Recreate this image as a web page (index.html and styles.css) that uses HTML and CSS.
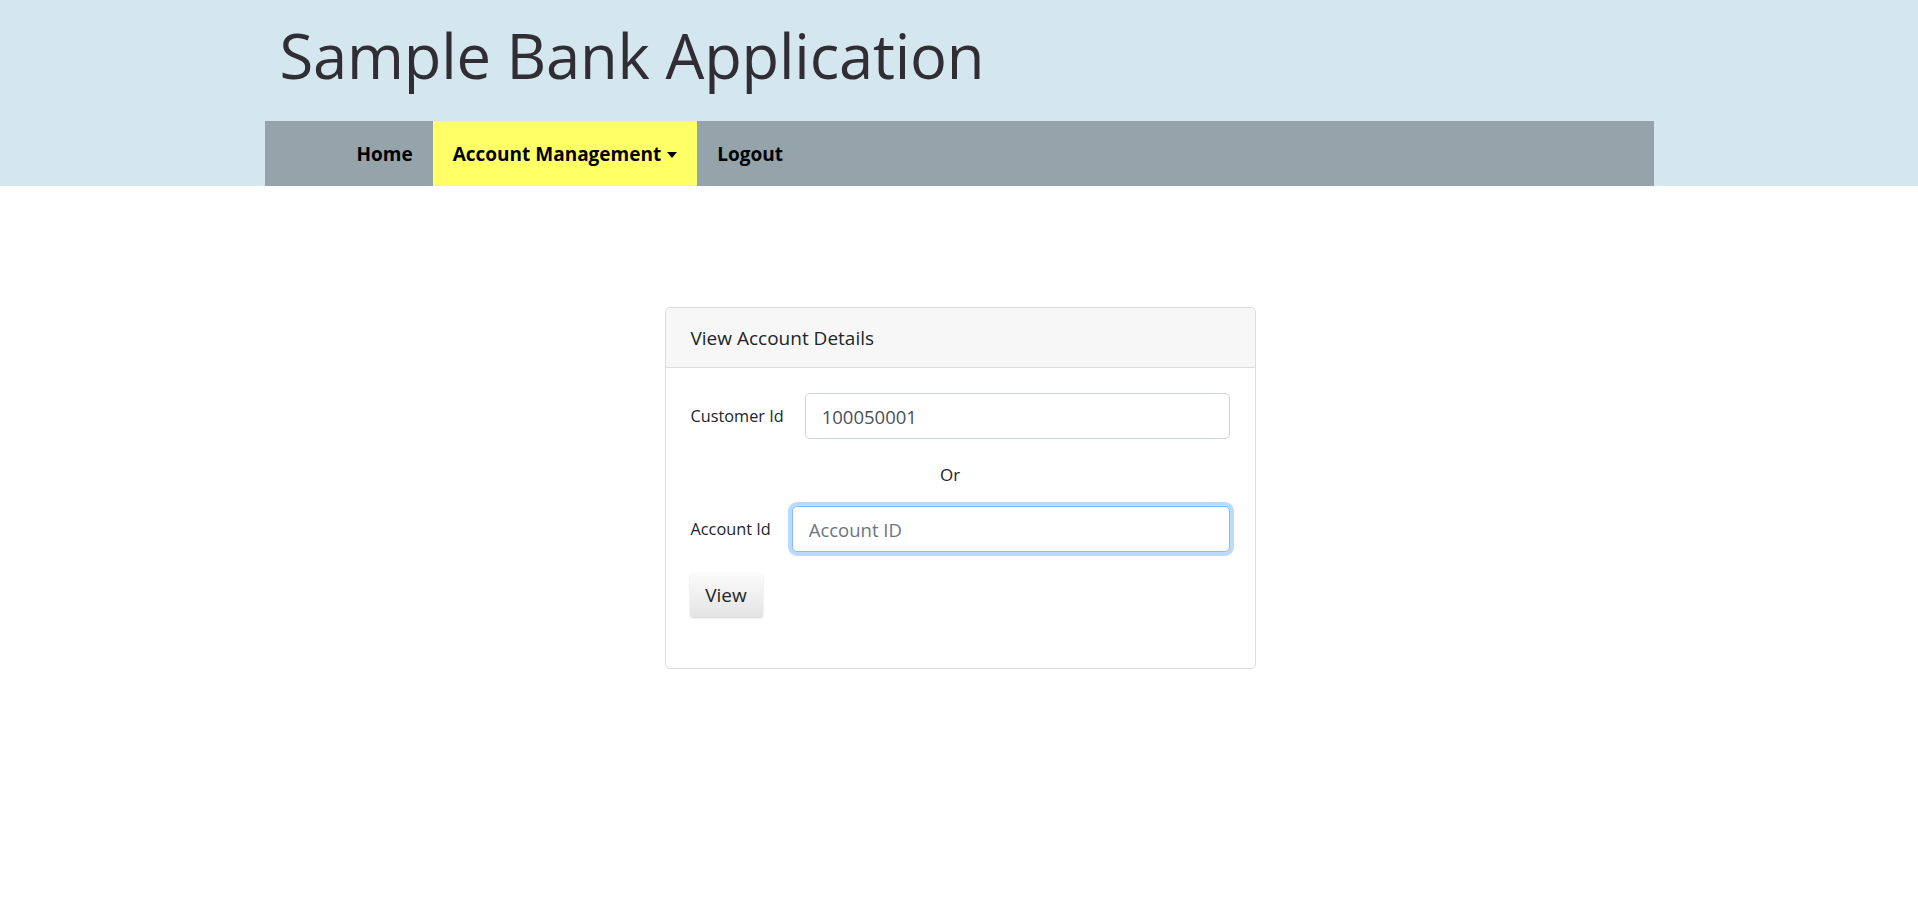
FILE: index.html
```html
<!DOCTYPE html>
<html lang="en">
<head>
<meta charset="utf-8">
<title>Sample Bank Application</title>
<link rel="stylesheet" href="styles.css">
</head>
<body>
<header class="site-header">
  <div class="container">
    <h1 class="site-title">Sample Bank Application</h1>
    <nav class="navbar">
      <a class="nav-item" href="#">Home</a>
      <a class="nav-item nav-item-active dropdown-toggle" href="#">Account Management</a>
      <a class="nav-item" href="#">Logout</a>
    </nav>
  </div>
</header>
<main class="main">
  <section class="card">
    <div class="card-header">View Account Details</div>
    <form class="card-body">
      <div class="form-row">
        <label class="form-label" for="cid">Customer Id</label>
        <input class="form-control" id="cid" type="text" value="100050001">
      </div>
      <div class="or-text">Or</div>
      <div class="form-row">
        <label class="form-label" for="aid">Account Id</label>
        <input class="form-control form-control-focus" id="aid" type="text" placeholder="Account ID">
      </div>
      <button class="btn" type="button">View</button>
    </form>
  </section>
</main>
</body>
</html>
```
FILE: styles.css
```css
html, body {
  margin: 0;
  padding: 0;
  background: #ffffff;
  font-family: "Open Sans", "Noto Sans", "Liberation Sans", sans-serif;
  color: #212529;
}

.site-header {
  background: #d4e7ef;
}

.container {
  width: 1389px;
  margin: 0 auto;
}

.site-title {
  margin: 0;
  padding: 15px 0 0 15px;
  height: 121px;
  box-sizing: border-box;
  font-size: 61.5px;
  font-weight: 400;
  line-height: 80px;
  letter-spacing: -0.2px;
  color: #312d35;
}

.navbar {
  display: flex;
  height: 65px;
  padding-left: 72px;
  background: #95a3aa;
}

.nav-item {
  display: flex;
  align-items: center;
  padding: 0 20px;
  font-size: 19px;
  font-weight: 700;
  color: #000000;
  text-decoration: none;
  letter-spacing: 0;
}

.nav-item-active {
  background: #ffff66;
}

.dropdown-toggle::after {
  content: "";
  display: inline-block;
  margin-left: 6px;
  margin-top: 2px;
  border-top: 6px solid #000;
  border-left: 5px solid transparent;
  border-right: 5px solid transparent;
}

.main {
  padding: 121px 0 0 2px;
}

.card {
  width: 591px;
  margin: 0 auto;
  border: 1px solid #dcdcdc;
  border-radius: 5px;
  box-sizing: border-box;
}

.card-header {
  height: 60px;
  box-sizing: border-box;
  display: flex;
  align-items: center;
  padding: 0 25px;
  background: #f7f7f7;
  border-bottom: 1px solid #dcdcdc;
  border-radius: 5px 5px 0 0;
  font-size: 19px;
  color: #212529;
}

.card-body {
  margin: 0;
  padding: 25px 25px 51px 25px;
}

.form-row {
  display: flex;
  align-items: center;
  gap: 21px;
}

.form-label {
  font-size: 16.3px;
  color: #212529;
}

.form-control {
  flex: 1;
  min-width: 0;
  height: 46px;
  box-sizing: border-box;
  padding: 0 16px;
  border: 1px solid #ced4da;
  border-radius: 5px;
  font-family: inherit;
  font-size: 18.5px;
  color: #495057;
  background: #fff;
  outline: none;
}

.form-control::placeholder {
  color: #6c757d;
}

.form-control-focus {
  border-color: #80bdff;
  box-shadow: 0 0 0 4px rgba(0, 123, 255, 0.27);
}

.or-text {
  margin: 22px 0 18px;
  line-height: 27px;
  padding-right: 20px;
  text-align: center;
  font-size: 17px;
  color: #212529;
}

.btn {
  display: block;
  margin-top: 21px;
  margin-left: -1px;
  width: 73px;
  height: 44px;
  border: none;
  border-radius: 3px;
  background: linear-gradient(#fbfbfb, #e4e4e4);
  box-shadow: 0 1px 2px rgba(0, 0, 0, 0.18);
  font-family: inherit;
  font-size: 19px;
  color: #212529;
  cursor: pointer;
}
```
